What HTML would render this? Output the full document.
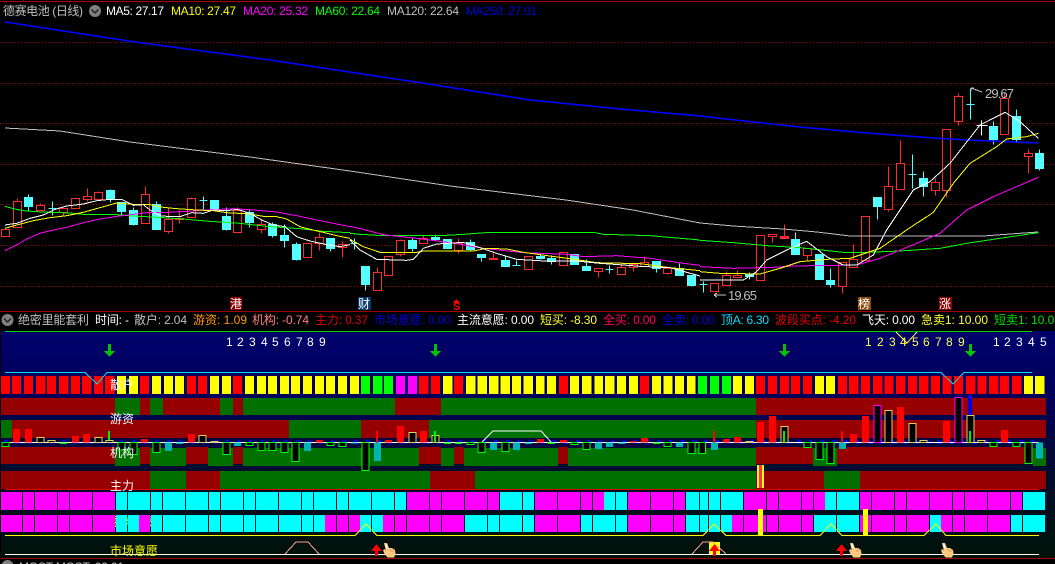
<!DOCTYPE html>
<html lang="zh">
<head>
<meta charset="utf-8">
<title>德赛电池</title>
<style>
html,body{margin:0;padding:0;background:#000;width:1055px;height:564px;overflow:hidden}
svg{display:block;position:absolute;left:0;top:0}
text{font-family:"Liberation Sans","WenQuanYi Zen Hei","Noto Sans CJK SC",sans-serif;font-size:12px}
.l polyline,.l path{fill:none;vector-effect:non-scaling-stroke;stroke-width:1}
.hr{fill:#f00}
.ht{fill:#00b4b4}
.hg{fill:#000;stroke:#0f0;vector-effect:non-scaling-stroke;stroke-width:1}
.hy{fill:#000;stroke:#e0d060;vector-effect:non-scaling-stroke;stroke-width:1}
.hm{fill:#000;stroke:#f0f;vector-effect:non-scaling-stroke;stroke-width:1}
.hG{fill:#0e0}
</style>
</head>
<body>
<svg width="1055" height="564" viewBox="0 0 1055 564" xmlns="http://www.w3.org/2000/svg" shape-rendering="crispEdges">
<defs>
<linearGradient id="bg" gradientUnits="userSpaceOnUse" x1="0" y1="331" x2="0" y2="558">
<stop offset="0" stop-color="#00006c"/>
<stop offset=".3" stop-color="#000058"/>
<stop offset=".6" stop-color="#000c30"/>
<stop offset="1" stop-color="#001208"/>
</linearGradient>
</defs>
<rect width="1055" height="564" fill="#000"/>

<!-- top frame -->
<path d="M0 1.5H1055M23.5 0V2" stroke="#b00000" fill="none"/>

<!-- grid -->
<path d="M0 42.5H1055M0 83.5H1055M0 123.5H1055M0 164.5H1055M0 204.5H1055M0 245.5H1055M0 286.5H1055" stroke="#a00000" stroke-dasharray="1 2" fill="none"/>

<g transform="translate(.5,.5)">
<!-- wicks -->
<path fill="none" stroke="#ff2a2a" stroke-width="1.2" d="M17 198V227M40 203V210M63 208V216M87 188V201M98 191V199M145 186V223M168 208V233M179 210V223M191 197V217M237 207V232M261 219V233M319 232V250M342 241V257M377 267V290M400 239V256M423 235V243M458 238V253M493 252V259M598 268V277M621 262V274M633 262V271M644 256V266M667 268V274M726 271V285M737 270V277M772 234V242M784 224V238M807 248V260M842 262V293M853 244V267M888 166V211M900 140V189M935 178V195M946 129V197M958 93V125M1004 92V134M1028 149V173"/>
<path fill="none" stroke="#54ffff" stroke-width="1.2" d="M28 194V210M52 201V215M110 189V202M121 202V215M133 207V225M156 201V229M203 196V209M226 207V230M249 209V227M272 222V237M284 224V247M296 242V260M330 238V251M354 238V249M365 266V290M412 237V251M435 235V241M470 239V251M481 254V261M505 256V266M516 260V265M540 253V259M551 256V264M586 259V270M609 265V273M656 261V272M679 263V275M691 275V286M703 281V292M749 272V279M795 232V254M830 268V287M877 197V219M912 154V188M923 171V196M970 88V119M993 121V144M1016 109V141M1039 149V170"/>
<path stroke="#fff" fill="none" d="M981 120V135M976 125H987"/>

<!-- red bodies -->
<path fill="#000" stroke="#ff2a2a" stroke-width="1.2" d="M1 229h8V236h-8zM13 201h8V227h-8zM36 205h8V210h-8zM59 208h8V212h-8zM71 198h8V208h-8zM83 196h8V199h-8zM94 192h8V199h-8zM141 194h8V223h-8zM164 219h8V231h-8zM175 218h8V219h-8zM187 198h8V217h-8zM233 210h8V232h-8zM257 224h8V229h-8zM303 243h8V257h-8zM315 237h8V243h-8zM338 244h8V247h-8zM373 272h8V290h-8zM384 256h8V275h-8zM396 240h8V254h-8zM419 238h8V243h-8zM454 243h8V250h-8zM524 256h8V269h-8zM559 252h8V265h-8zM594 268h8V271h-8zM617 267h8V274h-8zM629 264h8V267h-8zM640 262h8V266h-8zM663 268h8V273h-8zM710 283h8V291h-8zM722 275h8V285h-8zM733 275h8V277h-8zM756 235h8V280h-8zM768 234h8V236h-8zM803 248h8V255h-8zM838 262h8V286h-8zM849 259h8V267h-8zM861 216h8V260h-8zM884 186h8V209h-8zM896 163h8V189h-8zM931 182h8V190h-8zM942 129h8V190h-8zM954 96h8V121h-8zM1000 98h8V134h-8zM1024 153h8V156h-8z"/>
<path fill="#ff2a2a" stroke="#ff2a2a" d="M489 258h8v1h-8zM780 236h8v2h-8z"/>
<!-- cyan bodies -->
<path fill="#54ffff" stroke="#54ffff" d="M24 197h8V206h-8zM106 190h8V199h-8zM117 202h8V211h-8zM129 210h8V224h-8zM152 204h8V229h-8zM210 200h8V209h-8zM222 216h8V229h-8zM245 212h8V222h-8zM268 224h8V235h-8zM280 235h8V240h-8zM292 244h8V259h-8zM326 238h8V248h-8zM361 266h8V284h-8zM408 240h8V248h-8zM431 237h8V239h-8zM443 239h8V248h-8zM466 242h8V249h-8zM477 254h8V257h-8zM501 260h8V266h-8zM536 256h8V258h-8zM547 258h8V261h-8zM570 254h8V264h-8zM582 266h8V270h-8zM652 261h8V268h-8zM675 268h8V275h-8zM687 275h8V285h-8zM745 274h8V276h-8zM791 239h8V254h-8zM815 254h8V279h-8zM826 280h8V284h-8zM873 197h8V206h-8zM919 178h8V186h-8zM989 126h8V139h-8zM1012 116h8V139h-8zM1035 153h8V168h-8z"/>
<!-- dojis -->
<path fill="none" stroke="#54ffff" d="M48 208H56M199 200H207M350 243H358M512 265H520M605 269H613M699 284H707M908 174H916M966 104H974"/>
</g>

<!-- MA lines -->
<polyline fill="none" stroke="#0000ff" stroke-width="1.6" points="5,22 135,42 270,60 422,83 530,100 620,109 700,116 753,122 800,127 867,133 933,138 967,140 1038,143"/>
<polyline fill="none" stroke="#c0c0c0" points="5,128 60,131 130,142 250,157 350,171 450,186 566,200 633,210 700,223 733,226 783,229 817,232 850,236 900,236 983,236 1038,232"/>
<g class="l" transform="translate(0,170) scale(.33333)">
<polyline stroke="#00ff00" points="15,109 40,116 70,122 110,125 150,127 210,129 250,133 350,134 400,138 490,143 560,148 630,154 720,160 800,169 900,176 970,184 1050,188"/>
<polyline stroke="#ff00ff" points="15,242 50,225 80,207 120,190 160,180 200,172 250,158 300,147 350,139 400,133 450,127 500,127 560,124 620,120 700,116 760,120 830,126 890,137 950,150 1050,170"/>
<polyline stroke="#ffff00" points="15,175 50,165 100,152 150,143 200,137 250,127 300,113 350,99 400,103 450,104 490,112 530,116 590,120 640,122 680,128 750,132 790,139 830,140 860,147 900,170 930,178 970,187 1010,197 1050,205"/>
<polyline stroke="#ffffff" points="15,165 50,160 90,145 130,135 165,118 200,108 250,102 290,92 330,88 365,88 400,106 430,104 450,120 480,137 510,140 540,140 575,128 610,130 640,120 680,122 712,118 750,130 785,150 820,165 855,170 890,200 930,213 980,224 1020,230 1050,224"/>
</g>
<g class="l" transform="translate(350,200) scale(.33333)">
<polyline stroke="#00ff00" points="0,100 30,103 100,107 270,107 340,103 420,97 730,97 760,103 900,107 1050,120"/>
<polyline stroke="#ff00ff" points="0,79 40,88 100,104 200,115 300,128 400,145 520,158 650,163 700,170 800,167 900,175 1000,190 1050,196"/>
<polyline stroke="#ffff00" points="0,118 40,140 90,157 200,157 220,153 370,153 410,145 470,147 520,157 600,168 680,179 740,188 870,191 960,203 1050,212"/>
<polyline stroke="#ffffff" points="0,120 30,150 80,178 170,181 190,178 220,145 260,132 340,127 390,143 440,160 500,178 600,184 680,183 750,190 820,195 870,199 960,203 1050,228"/>
</g>
<g class="l" transform="translate(700,80) scale(.33333)">
<polyline stroke="#00ff00" points="0,481 100,488 200,497 300,503 430,517 500,517 600,513 720,505 800,490 900,475 1015,458"/>
<polyline stroke="#ff00ff" points="0,560 100,565 220,562 280,558 470,555 540,535 650,490 720,460 800,390 880,350 1015,292"/>
<polyline stroke="#ffff00" points="0,575 60,580 180,582 240,565 300,545 380,538 450,535 540,505 620,450 700,397 760,310 810,250 890,200 920,177 980,170 1015,160"/>
<polyline stroke="#ffffff" points="0,600 60,600 130,600 170,575 200,540 260,510 320,484 380,530 430,555 470,555 520,525 560,450 640,330 690,305 750,250 840,135 915,97 960,125 1015,175"/>
</g>

<!-- price labels -->
<path d="M714 295H726M714 295l3-2M714 295l3 2M971 88L982 92M971 88l0 3M971 88l3 0" stroke="#c0c0c0" fill="none"/>
<text x="728" y="300" fill="#c0c0c0" textLength="29" style="font-size:13px">19.65</text>
<text x="985" y="98" fill="#c0c0c0" style="font-size:13px" textLength="29">29.67</text>

<!-- header -->
<text x="3" y="15" fill="#c0c0c0" textLength="80">德赛电池 (日线)</text>
<circle cx="95" cy="11" r="6" fill="#808080" shape-rendering="auto"/>
<path d="M91.500 9.500L95 13L98.500 9.500" stroke="#222" stroke-width="1.500" fill="none" shape-rendering="auto"/>
<text x="106" y="15" fill="#fff" textLength="58">MA5: 27.17</text>
<text x="171" y="15" fill="#ff0" textLength="65">MA10: 27.47</text>
<text x="243" y="15" fill="#f0f" textLength="65">MA20: 25.32</text>
<text x="315" y="15" fill="#0f0" textLength="65">MA60: 22.64</text>
<text x="387" y="15" fill="#c0c0c0" textLength="72">MA120: 22.64</text>
<text x="466" y="15" fill="#0000e0" textLength="71">MA250: 27.01</text>

<!-- badges -->
<rect x="230" y="297" width="12" height="13" fill="#8b0000"/>
<text x="230" y="308" fill="#fff">港</text>
<rect x="358" y="297" width="13" height="13" fill="#0a3a6a"/>
<text x="358" y="308" fill="#fff">财</text>
<path d="M456.500 299L460 303H453z" fill="#f00"/>
<text x="453" y="310" fill="#f00" style="font-size:11px;font-weight:bold">S</text>
<rect x="858" y="297" width="13" height="13" fill="#8b4a10"/>
<text x="858" y="308" fill="#fff">榜</text>
<rect x="939" y="297" width="13" height="13" fill="#8b0000"/>
<text x="939" y="308" fill="#fff">涨</text>

<!-- second header -->
<path d="M0 311.500H1055" stroke="#a00000"/>
<circle cx="7.500" cy="320" r="6" fill="#808080" shape-rendering="auto"/>
<path d="M4 318.500L7.500 322L11 318.500" stroke="#222" stroke-width="1.500" fill="none" shape-rendering="auto"/>
<text x="18" y="324" fill="#c0c0c0" textLength="71">绝密里能套利</text>
<text x="95" y="324" fill="#fff" textLength="34">时间: -</text>
<text x="134" y="324" fill="#c0c0c0" textLength="53">散户: 2.04</text>
<text x="193" y="324" fill="#ff9900" textLength="54">游资: 1.09</text>
<text x="252" y="324" fill="#ff8080" textLength="57">机构: -0.74</text>
<text x="315" y="324" fill="#e00000" textLength="53">主力: 0.37</text>
<text x="374" y="324" fill="#0000e0" textLength="77">市场意愿: 0.00</text>
<text x="457" y="324" fill="#fff" textLength="77">主流意愿: 0.00</text>
<text x="540" y="324" fill="#ffff30" textLength="57">短买: -8.30</text>
<text x="603" y="324" fill="#ff0060" textLength="53">全买: 0.00</text>
<text x="662" y="324" fill="#0000e0" textLength="53">全卖: 0.00</text>
<text x="721" y="324" fill="#00e0ff" textLength="48">顶A: 6.30</text>
<text x="775" y="324" fill="#e80000" textLength="81">波段买点: -4.20</text>
<text x="862" y="324" fill="#fff" textLength="53">飞天: 0.00</text>
<text x="921" y="324" fill="#ffff30" textLength="67">急卖1: 10.00</text>
<text x="994" y="324" fill="#00e000" textLength="67">短卖1: 10.00</text>

<!-- lower panel -->
<rect x="1" y="331" width="1054" height="228" fill="url(#bg)"/>
<path d="M5 331.500H1032" stroke="#00d000"/>
<path d="M896 332L907 343L917 332" stroke="#ffff30" fill="none"/>

<g fill="#fff">
<text x="226" y="346">1</text><text x="237" y="346">2</text><text x="249" y="346">3</text><text x="261" y="346">4</text><text x="272" y="346">5</text><text x="284" y="346">6</text><text x="296" y="346">7</text><text x="307" y="346">8</text><text x="319" y="346">9</text>
<text x="993" y="346">1</text><text x="1004" y="346">2</text><text x="1016" y="346">3</text><text x="1028" y="346">4</text><text x="1040" y="346">5</text>
</g>
<g fill="#ffff50">
<text x="865" y="346">1</text><text x="877" y="346">2</text><text x="889" y="346">3</text><text x="900" y="346">4</text><text x="912" y="346">5</text><text x="923" y="346">6</text><text x="935" y="346">7</text><text x="946" y="346">8</text><text x="958" y="346">9</text>
</g>
<path fill="#00c000" d="M108 344h3v7h4l-5.500 6l-5.500-6h4zM434 344h3v7h4l-5.500 6l-5.500-6h4zM783 344h3v7h4l-5.500 6l-5.500-6h4zM969 344h3v7h4l-5.500 6l-5.500-6h4z"/>

<!-- row 1 bars -->
<g transform="translate(0,385) scale(.33807,1)" stroke-width="18" fill="none">
<path stroke="#ff0000" d="M3 0H30M36 0H62M71 0H98M107 0H134M139 0H166M175 0H202M210 0H237M243 0H270M278 0H305M311 0H338M414 0H441M553 0H580M586 0H612M689 0H716M1240 0H1267M1275 0H1302M1343 0H1370"/>
<path stroke="#ffff00" d="M346 0H373M382 0H408M450 0H476M485 0H512M518 0H544M621 0H648M657 0H684M725 0H751M760 0H787M793 0H820M828 0H855M861 0H888M896 0H923M932 0H959M964 0H991M1000 0H1027M1035 0H1062M1311 0H1338M1379 0H1406M1413 0H1440M1447 0H1474M1481 0H1508M1514 0H1541"/>
<path stroke="#00ff00" d="M1068 0H1095M1104 0H1131M1136 0H1163"/>
<path stroke="#ff00ff" d="M1172 0H1198M1207 0H1234"/>
</g>
<g transform="translate(525,385) scale(.33807,1)" stroke-width="18" fill="none">
<path stroke="#ff0000" d="M101 0H127M340 0H367M683 0H710M719 0H746M754 0H781M787 0H814M822 0H849M926 0H953M959 0H986M994 0H1021M1030 0H1057M1063 0H1090M1098 0H1125M1133 0H1160M1166 0H1193M1201 0H1228M1235 0H1262M1269 0H1296M1305 0H1332M1338 0H1365M1373 0H1400M1405 0H1432M1441 0H1468"/>
<path stroke="#ffff00" d="M-4 0H24M33 0H58M65 0H91M133 0H160M169 0H196M205 0H231M237 0H264M272 0H299M308 0H334M376 0H402M410 0H436M444 0H470M479 0H505M615 0H642M651 0H678M858 0H885M890 0H917M1476 0H1503M1509 0H1536"/>
<path stroke="#00ff00" d="M511 0H538M547 0H574M582 0H609"/>
</g>
<path d="M5 372.500H85L97 384L107 372.500H941L953 384L964 372.500H1032" stroke="#00e0e0" fill="none"/>

<!-- band 游资 y398-415 -->
<rect x="1" y="398" width="114" height="17" fill="#960000"/><rect x="115" y="398" width="25" height="17" fill="#007000"/><rect x="140" y="398" width="10" height="17" fill="#960000"/><rect x="150" y="398" width="13" height="17" fill="#007000"/><rect x="163" y="398" width="57" height="17" fill="#960000"/><rect x="220" y="398" width="13" height="17" fill="#007000"/><rect x="233" y="398" width="10" height="17" fill="#960000"/><rect x="243" y="398" width="152" height="17" fill="#007000"/><rect x="395" y="398" width="46" height="17" fill="#960000"/><rect x="441" y="398" width="315" height="17" fill="#007000"/><rect x="756" y="398" width="290" height="17" fill="#960000"/>
<!-- band y420-438 -->
<rect x="1" y="420" width="11" height="18" fill="#007000"/><rect x="12" y="420" width="277" height="18" fill="#960000"/><rect x="289" y="420" width="72" height="18" fill="#007000"/><rect x="361" y="420" width="68" height="18" fill="#960000"/><rect x="429" y="420" width="327" height="18" fill="#007000"/><rect x="756" y="420" width="290" height="18" fill="#960000"/>
<!-- band y447-466 -->
<rect x="1" y="447" width="114" height="17" fill="#960000"/><rect x="115" y="448" width="25" height="18" fill="#007000"/><rect x="140" y="447" width="10" height="17" fill="#960000"/><rect x="150" y="448" width="36" height="18" fill="#007000"/><rect x="186" y="447" width="22" height="17" fill="#960000"/><rect x="208" y="448" width="25" height="18" fill="#007000"/><rect x="233" y="447" width="10" height="17" fill="#960000"/><rect x="243" y="448" width="176" height="18" fill="#007000"/><rect x="419" y="447" width="22" height="17" fill="#960000"/><rect x="441" y="448" width="13" height="18" fill="#007000"/><rect x="454" y="447" width="10" height="17" fill="#960000"/><rect x="464" y="448" width="94" height="18" fill="#007000"/><rect x="558" y="447" width="10" height="17" fill="#960000"/><rect x="568" y="448" width="188" height="18" fill="#007000"/><rect x="756" y="447" width="57" height="17" fill="#960000"/><rect x="813" y="448" width="24" height="18" fill="#007000"/><rect x="837" y="447" width="196" height="17" fill="#960000"/><rect x="1033" y="448" width="13" height="18" fill="#007000"/>
<!-- band 主力 y471-489 -->
<rect x="1" y="471" width="149" height="18" fill="#960000"/><rect x="150" y="471" width="36" height="18" fill="#007000"/><rect x="186" y="471" width="34" height="18" fill="#960000"/><rect x="220" y="471" width="210" height="18" fill="#007000"/><rect x="430" y="471" width="45" height="18" fill="#960000"/><rect x="475" y="471" width="281" height="18" fill="#007000"/><rect x="756" y="471" width="68" height="18" fill="#960000"/><rect x="824" y="471" width="36" height="18" fill="#007000"/><rect x="860" y="471" width="186" height="18" fill="#960000"/>
<rect x="757" y="465" width="2" height="23" fill="#ffff00"/><rect x="759" y="465" width="3" height="23" fill="#ff3060"/><rect x="762" y="465" width="2" height="23" fill="#ffff00"/>
<path d="M5 489.500H1039" stroke="#e00000"/>

<!-- zero line -->
<path d="M4 442H1040" stroke="#0000ff" stroke-width="4" stroke-dasharray="3 8.670" fill="none"/>
<path d="M5 442.500H1039" stroke="#ffffff" fill="none"/>

<!-- histograms -->
<g transform="translate(0,395) scale(.33333)">
<path class="hr" d="M39 102h21v40h-21zM75 102h21v40h-21zM216 123h21v19h-21zM249 117h21v25h-21zM423 132h21v10h-21zM564 117h21v25h-21zM948 135h21v7h-21z"/>
<path class="ht" d="M495 142h21v26h-21zM528 142h21v5h-21zM702 142h21v11h-21zM912 142h21v26h-21z"/>
<path class="hG" d="M180 142h21v5h-21zM324 108h6v34h-6z"/>
<path class="hg" d="M6 142h21v13h-21zM354 142h21v23h-21zM390 142h21v37h-21zM459 142h21v31h-21zM669 142h21v37h-21zM738 142h21v9h-21zM774 142h21v25h-21zM807 142h21v25h-21zM843 142h21v31h-21zM876 142h21v58h-21zM981 142h21v10h-21zM1017 142h21v13h-21z"/>
<path class="hy" d="M111 127h21v15h-21zM144 136h21v6h-21zM285 127h21v15h-21zM318 136h21v6h-21zM597 121h21v21h-21zM633 139h21v3h-21z"/>
</g>
<g transform="translate(350,395) scale(.33333)">
<path class="ht" d="M3 142h21v3h-21zM72 142h21v56h-21zM420 142h21v23h-21zM489 142h21v23h-21zM525 142h21v5h-21zM735 142h21v20h-21zM768 142h21v14h-21zM804 142h21v5h-21zM978 142h21v14h-21z"/>
<path class="hr" d="M78 108h6v34h-6zM105 135h21v7h-21zM141 93h21v49h-21zM210 108h21v34h-21zM561 132h21v10h-21zM630 135h21v7h-21zM840 138h21v4h-21zM873 129h21v13h-21z"/>
<path class="hG" d="M282 142h21v5h-21zM315 142h21v5h-21zM594 142h21v5h-21zM909 142h21v5h-21z"/>
<path class="hg" d="M36 142h21v85h-21zM351 142h21v7h-21zM384 142h21v31h-21zM456 142h21v28h-21zM663 142h21v7h-21zM699 142h21v22h-21zM942 142h21v13h-21zM1014 142h21v34h-21zM1047 142h20v34h-20z"/>
<path class="hy" d="M177 112h21v30h-21zM246 121h21v21h-21z"/>
<path class="hG" d="M252 108h6v34h-6z"/>
</g>
<g transform="translate(700,395) scale(.33333)">
<path class="ht" d="M33 142h21v23h-21zM417 142h21v20h-21zM1008 142h21v49h-21z"/>
<path class="hr" d="M39 108h6v34h-6zM69 132h21v10h-21zM102 126h21v16h-21zM171 81h21v61h-21zM207 63h21v79h-21zM423 108h6v34h-6zM450 117h21v25h-21zM486 63h21v79h-21zM591 36h21v106h-21zM729 78h21v64h-21zM903 105h21v37h-21z"/>
<path class="hg" d="M312 142h21v16h-21zM348 142h21v52h-21zM381 142h21v64h-21zM870 142h21v13h-21zM939 142h21v13h-21zM975 142h21v64h-21z"/>
<path class="hy" d="M138 139h21v3h-21zM243 94h21v48h-21zM555 46h21v96h-21zM627 85h21v57h-21zM660 136h21v6h-21zM801 61h21v81h-21zM834 136h21v6h-21z"/>
<path class="hm" d="M522 31h21v111h-21zM765 7h21v135h-21z"/>
<path fill="#0000e0" d="M804 0h12v60h-12z"/>
<path class="hG" d="M249 108h6v34h-6zM807 108h6v34h-6z"/>
</g>
<path d="M482 442L493 431H541L551 442" stroke="#fff" fill="none"/>

<!-- labels -->
<text x="110" y="389" fill="#fff">散户</text>
<text x="110" y="423" fill="#fff">游资</text>
<text x="110" y="457" fill="#fff">机构</text>
<text x="110" y="490" fill="#fff">主力</text>
<text x="110" y="526" fill="#ffff00">主流意愿</text>

<!-- magenta / cyan bands -->
<g transform="translate(0,501) scale(.33333,1)" stroke-width="18" fill="none">
<path stroke="#ff00ff" d="M3 0H66M69 0H102M105 0H171M174 0H207M210 0H276M279 0H345"/>
<path stroke="#00ffff" d="M348 0H381M384 0H450M453 0H486M489 0H555M558 0H624M627 0H660M663 0H729M732 0H765M768 0H834M837 0H903M906 0H939M942 0H1008M1011 0H1044"/>
</g>
<g transform="translate(350,501) scale(.33333,1)" stroke-width="18" fill="none">
<path stroke="#00ffff" d="M-3 0H63M66 0H132M135 0H168M450 0H516M519 0H552M762 0H795M798 0H831M1008 0H1047"/>
<path stroke="#ff00ff" d="M171 0H237M240 0H273M276 0H342M345 0H411M414 0H447M555 0H621M624 0H690M693 0H726M729 0H762M834 0H900M903 0H969M972 0H1005"/>
</g>
<g transform="translate(700,501) scale(.33333,1)" stroke-width="18" fill="none">
<path stroke="#00ffff" d="M0 0H24M27 0H60M63 0H129M375 0H408M411 0H477M969 0H1035"/>
<path stroke="#ff00ff" d="M132 0H198M201 0H234M237 0H303M306 0H339M342 0H375M480 0H513M516 0H582M585 0H618M621 0H687M690 0H756M759 0H792M795 0H861M864 0H930M933 0H966"/>
</g>
<g transform="translate(0,523.500) scale(.33333,1)" stroke-width="17" fill="none">
<path stroke="#ff00ff" d="M3 0H66M69 0H102M105 0H171M174 0H207M210 0H276M279 0H345M417 0H450M975 0H1008M1011 0H1044M1047 0H1050"/>
<path stroke="#00ffff" d="M348 0H381M384 0H417M453 0H486M489 0H555M558 0H624M627 0H660M663 0H729M732 0H765M768 0H834M837 0H903M906 0H939M942 0H975"/>
</g>
<g transform="translate(350,523.500) scale(.33333,1)" stroke-width="17" fill="none">
<path stroke="#ff00ff" d="M0 0H30M99 0H132M135 0H168M171 0H237M240 0H273M276 0H342M555 0H621M624 0H690M834 0H900M903 0H969M972 0H1005"/>
<path stroke="#00ffff" d="M30 0H63M66 0H99M345 0H411M414 0H447M450 0H516M519 0H552M693 0H726M729 0H795M798 0H831M1008 0H1047"/>
</g>
<g transform="translate(700,523.500) scale(.33333,1)" stroke-width="17" fill="none">
<path stroke="#00ffff" d="M0 0H24M27 0H60M63 0H96M342 0H408M411 0H477M690 0H723M933 0H966M969 0H1035"/>
<path stroke="#ff00ff" d="M96 0H129M132 0H198M201 0H234M237 0H303M306 0H339M480 0H513M516 0H582M585 0H618M621 0H687M723 0H756M759 0H792M795 0H861M864 0H930"/>
</g>
<rect x="758" y="509" width="5" height="26" fill="#ffff00"/>
<rect x="863" y="509" width="5" height="26" fill="#ffff00"/>

<!-- signal lines -->
<path d="M5 535.500H355L366 524L377 535.500H703L714 524L726 535.500H820L831 524L842 535.500H924L936 524L946 535.500H1039" stroke="#ffff00" fill="none"/>
<rect x="709" y="542" width="11" height="12" fill="#ffff00"/>
<path d="M285 554L296 542H308L319 554M692 554L703 542H713L726 554" stroke="#ffa090" fill="none"/>
<path d="M5 554.500H1039" stroke="#fff"/>
<text x="110" y="555" fill="#ffff00">市场意愿</text>

<!-- red arrows -->
<path fill="#f00" d="M376.500 544L382 551H378V556H375V551H371zM714.500 544L720 551H716V556H713V551H709zM841.500 544L847 551H843V556H840V551H836z"/>
<!-- hands -->
<g shape-rendering="auto">
<g transform="translate(383,543)"><path d="M1 0L4 0L6 5L9 5L12 7L12.500 11L11 14.500L4.500 14.500L1 10L0 7L2 6L3 8z" fill="#ffc880"/><path d="M2.500 1L4 5.500" stroke="#fff" stroke-width="1.400" fill="none"/><path d="M8 6V9M10 7V9" stroke="#c88a40" stroke-width=".7" fill="none"/></g>
<g transform="translate(849,543)"><path d="M1 0L4 0L6 5L9 5L12 7L12.500 11L11 14.500L4.500 14.500L1 10L0 7L2 6L3 8z" fill="#ffc880"/><path d="M2.500 1L4 5.500" stroke="#fff" stroke-width="1.400" fill="none"/><path d="M8 6V9M10 7V9" stroke="#c88a40" stroke-width=".7" fill="none"/></g>
<g transform="translate(941,543)"><path d="M1 0L4 0L6 5L9 5L12 7L12.500 11L11 14.500L4.500 14.500L1 10L0 7L2 6L3 8z" fill="#ffc880"/><path d="M2.500 1L4 5.500" stroke="#fff" stroke-width="1.400" fill="none"/><path d="M8 6V9M10 7V9" stroke="#c88a40" stroke-width=".7" fill="none"/></g>
</g>

<!-- bottom -->
<rect x="0" y="559" width="1055" height="5" fill="#000"/>
<path d="M0 558.500H1055" stroke="#a00000"/>
<circle cx="7.500" cy="566" r="6" fill="#808080" shape-rendering="auto"/>
<text x="19" y="571" fill="#c0c0c0" textLength="105">MOST MOST: 00.01</text>
</svg>
</body>
</html>
